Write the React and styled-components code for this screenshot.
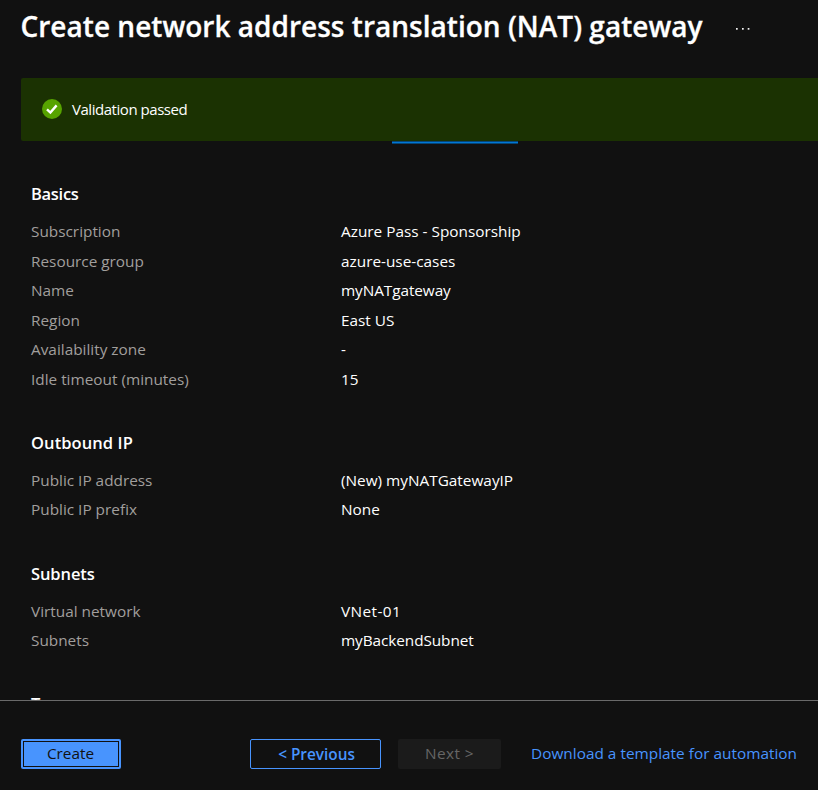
import React from "react";
import styled, { createGlobalStyle } from "styled-components";

const GlobalStyle = createGlobalStyle`
  * { box-sizing: border-box; }
  html, body { margin: 0; background: #111111; overflow: hidden; }
  body {
    font-family: "Open Sans", "Noto Sans", sans-serif;
    font-size: 15.35px;
    color: #ffffff;
  }
`;

const Blade = styled.div`
  display: flex;
  flex-direction: column;
  width: 818px;
  height: 790px;
  background: #111111;
  overflow: hidden;
`;

const Header = styled.header`
  display: flex;
  align-items: center;
  flex: none;
  height: 78px;
  padding: 0 0 25px 20.5px;
`;

const Title = styled.h1`
  margin: 0;
  width: 715.5px;
  font-size: 28px;
  font-weight: 600;
  font-kerning: none;
  letter-spacing: 0.02px;
  line-height: 39px;
  white-space: nowrap;
  -webkit-text-stroke: 0.3px currentColor;
`;

const MoreButton = styled.button`
  display: flex;
  padding: 4px 0 0;
  border: 0;
  background: none;
  color: #f2f2f2;
`;

const Banner = styled.div`
  display: flex;
  align-items: center;
  flex: none;
  gap: 10px;
  height: 63px;
  margin-left: 21px;
  padding: 0 0 1px 21px;
  background: #1b3202;
  border-radius: 2px 0 0 2px;
`;

const BannerText = styled.span`
  font-size: 15px;
  letter-spacing: -0.46px;
  line-height: 20px;
`;

const TabIndicator = styled.div`
  flex: none;
  width: 126px;
  height: 3px;
  margin-left: 392px;
  background: #0078d4;
  border-top: 1px solid #064577;
  border-bottom: 1px solid #064577;
`;

const Summary = styled.main`
  flex: 1;
  min-height: 0;
  padding: 38px 0 0 31px;
  overflow: hidden;
`;

const Section = styled.section`
  padding-bottom: 33.75px;
`;

const SectionTitle = styled.h2`
  margin: 0 0 14px;
  font-size: 16.5px;
  font-weight: 600;
  line-height: 24px;
  height: 24px;
  letter-spacing: ${(p) => p.$tracking || 0}px;
`;

const Fields = styled.dl`
  display: grid;
  grid-template-columns: 310px 1fr;
  grid-auto-rows: 29.5px;
  margin: 0;
`;

const Label = styled.dt`
  line-height: 22px;
  color: #a19f9d;
  white-space: nowrap;
`;

const Value = styled.dd`
  margin: 0;
  line-height: 22px;
  white-space: nowrap;
  letter-spacing: ${(p) => p.$tracking || 0}px;
`;

const Footer = styled.footer`
  display: flex;
  align-items: flex-start;
  flex: none;
  height: 90px;
  padding: 38px 0 0 21px;
  border-top: 1px solid #6a6a6a;
`;

const Button = styled.button`
  height: 30px;
  padding: 0 0 2px;
  border: 1px solid transparent;
  border-radius: 2px;
  font: inherit;
  line-height: 26px;
  white-space: nowrap;
`;

const PrimaryButton = styled(Button)`
  display: flex;
  width: 100px;
  margin-right: 129px;
  padding: 2px;
  border: 0;
  background: #4894fe;
  color: #111111;
`;

const FocusRing = styled.span`
  flex: 1;
  height: 26px;
  border: 1px solid #111111;
  padding-right: 1px;
  line-height: 23px;
`;

const OutlineButton = styled(Button)`
  width: 131px;
  margin-right: 17px;
  padding: 0 0 1px 2px;
  border-color: #4894fe;
  background: transparent;
  color: #4894fe;
  font-weight: 600;
`;

const DisabledButton = styled(Button)`
  width: 103px;
  margin-right: 30px;
  background: #1b1b1b;
  color: #666666;
  letter-spacing: 0.4px;
`;

const TemplateLink = styled.a`
  color: #4894fe;
  line-height: 28px;
  letter-spacing: 0.02px;
  text-decoration: none;
  white-space: nowrap;
`;

const sections = [
  {
    title: "Basics",
    tracking: -0.3,
    fields: [
      ["Subscription", "Azure Pass - Sponsorship"],
      ["Resource group", "azure-use-cases"],
      ["Name", "myNATgateway", -0.08],
      ["Region", "East US"],
      ["Availability zone", "-"],
      ["Idle timeout (minutes)", "15"],
    ],
  },
  {
    title: "Outbound IP",
    tracking: 0.08,
    fields: [
      ["Public IP address", "(New) myNATGatewayIP"],
      ["Public IP prefix", "None"],
    ],
  },
  {
    title: "Subnets",
    tracking: -0.1,
    fields: [
      ["Virtual network", "VNet-01", 0.4],
      ["Subnets", "myBackendSubnet", -0.08],
    ],
  },
  { title: "Tags", fields: [] },
];

const SuccessIcon = () => (
  <svg width="20" height="20" viewBox="0 0 20 20" aria-hidden="true">
    <circle cx="10" cy="10" r="10" fill="#57a300" />
    <path d="M5 10.3 8.4 13.6 14.6 6.4" fill="none" stroke="#fff" strokeWidth="2.4" />
  </svg>
);

const MoreIcon = () => (
  <svg width="14" height="2" viewBox="0 0 14 2" fill="currentColor" aria-hidden="true">
    <rect x="0" y="0" width="1.7" height="1.7" />
    <rect x="6" y="0" width="1.7" height="1.7" />
    <rect x="11.7" y="0" width="1.7" height="1.7" />
  </svg>
);

export default function App() {
  return (
    <Blade>
      <GlobalStyle />
      <Header>
        <Title>Create network address translation (NAT) gateway</Title>
        <MoreButton aria-label="More">
          <MoreIcon />
        </MoreButton>
      </Header>
      <Banner role="status">
        <SuccessIcon />
        <BannerText>Validation passed</BannerText>
      </Banner>
      <TabIndicator />
      <Summary>
        {sections.map(({ title, tracking, fields }) => (
          <Section key={title}>
            <SectionTitle $tracking={tracking}>{title}</SectionTitle>
            <Fields>
              {fields.map(([label, value, valueTracking]) => (
                <React.Fragment key={label}>
                  <Label>{label}</Label>
                  <Value $tracking={valueTracking}>{value}</Value>
                </React.Fragment>
              ))}
            </Fields>
          </Section>
        ))}
      </Summary>
      <Footer>
        <PrimaryButton>
          <FocusRing>Create</FocusRing>
        </PrimaryButton>
        <OutlineButton>&lt; Previous</OutlineButton>
        <DisabledButton disabled>Next &gt;</DisabledButton>
        <TemplateLink>Download a template for automation</TemplateLink>
      </Footer>
    </Blade>
  );
}
